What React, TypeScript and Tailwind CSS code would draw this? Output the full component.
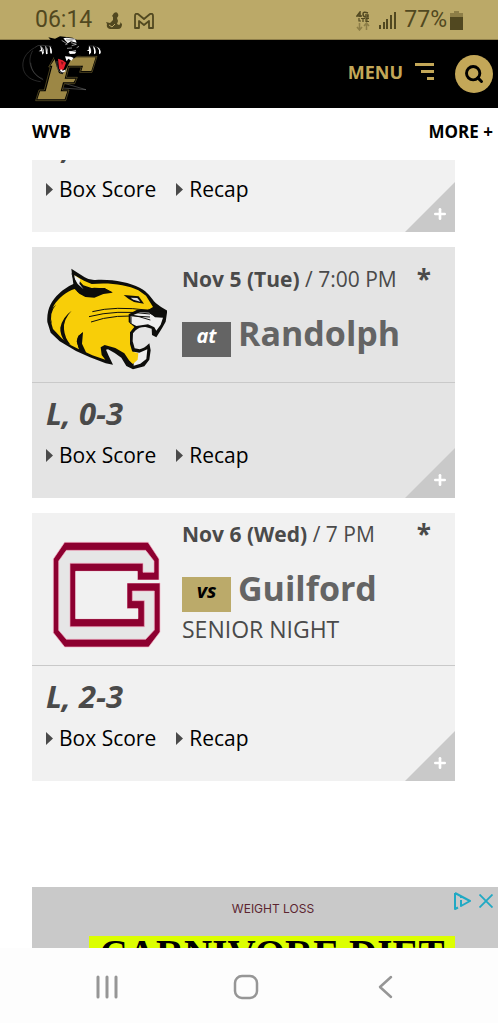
import { Plus, Search } from "lucide-react";

const games = [
  {
    id: "randolph",
    date: "Nov 5 (Tue)",
    time: "7:00 PM",
    place: "at",
    opponent: "Randolph",
    note: "",
    result: "L, 0-3",
    card: "bg-[#e4e4e4]",
    badge: "bg-[#646464] text-white",
    Logo: WildcatLogo,
  },
  {
    id: "guilford",
    date: "Nov 6 (Wed)",
    time: "7 PM",
    place: "vs",
    opponent: "Guilford",
    note: "SENIOR NIGHT",
    result: "L, 2-3",
    card: "bg-[#f1f1f1]",
    badge: "bg-[#bbaa6a] text-black",
    Logo: GuilfordLogo,
  },
];

function PantherLogo() {
  return (
    <svg viewBox="60 108 252 204" className="h-[68px] w-[84px]" aria-hidden="true">
      {/* tail */}
      <path d="M104 143 C76 158 64 182 70 208 C76 230 96 242 122 245 M98 152 C80 184 92 220 130 240 M92 188 C94 214 108 230 128 236" fill="none" stroke="#666" strokeWidth="1.2" />
      <path d="M186 248 L258 269 L186 264" fill="#000" stroke="#777" strokeWidth="1.5" />
      {/* letter */}
      <path d="M164 169 H291 L276 217 H239 L244 201 H207 L199 232 H232 L224 251 H193 L187 270 H207 L197 302 H107 L117 270 H133 L151 201 H146 Z" fill="#000" stroke="#8f7c3b" strokeWidth="1.5" />
      <path d="M168 172 H287 L274 213 H244 L249 197 H204 L194 236 H227 L221 247 H189 L182 274 H202 L194 298 H112 L120 274 H137 L157 197 H151 Z" fill="#9c8745" />
      {/* body and head */}
      <path d="M106 137 L158 131 L154 122 L145 112 L165 116 L180 109 L218 113 L232 121 L240 138 L240 160 L224 174 L212 181 L196 211 L187 223 L177 219 L170 200 L162 171 L125 164 L100 158 Z" fill="#000" />
      <path d="M232 141 L262 135 L280 137 L300 150 L292 166 L244 168 Z" fill="#000" />
      <path d="M104 143 Q112 134 128 136 L155 139 M265 138 Q282 134 301 146" fill="none" stroke="#777" strokeWidth="1.2" />
      {/* claws */}
      <path d="M121 137 Q133 144 132 158 L127 164 L125 154 L116 154 L123 149 Z M136 137 Q146 145 143 161 L138 163 L137 151 Z M149 137 Q158 147 155 161 L151 160 Z" fill="#fff" />
      <path d="M267 138 Q276 144 273 158 L267 164 L267 153 L260 153 L266 149 Z M279 138 Q291 147 287 160 L282 163 L282 151 Z M291 140 Q305 149 302 160 L297 163 L297 151 Z" fill="#fff" />
      <path d="M125 140 l5 17 M139 141 l4 17 M272 141 l3 14 M286 143 l3 15" stroke="#000" strokeWidth="1.5" />
      {/* face */}
      <path d="M190 115 L199 113 L225 116 L230 128 L213 124 L203 130 Z" fill="#fff" />
      <path d="M198 118 L226 119 M199 123 L218 121" stroke="#555" strokeWidth="1.3" />
      <path d="M185 121 L202 132 L196 134 M213 128 L229 133 L215 137 M201 145 L216 144 M230 143 L237 139 M206 157 L228 151" fill="none" stroke="#d8d8d8" strokeWidth="2" />
      <path d="M207 153 L229 155 L225 161 L209 162 Z" fill="#fff" />
      <path d="M174 176 L188 181 L198 188 L191 207 L184 213 L177 206 Z" fill="#e5202c" />
      <path d="M182 184 L186 196 L191 187 Z" fill="#8c111b" />
      <path d="M195 169 L200 184 L205 176 L214 182 L221 174 L213 170 Z M183 207 L188 212 L195 209 L196 215 L187 217 L180 213 Z" fill="#fff" />
      <path d="M171 183 Q168 207 183 219 Q193 221 199 207" fill="none" stroke="#aaa" strokeWidth="1.2" />
    </svg>
  );
}

function WildcatLogo() {
  return (
    <svg viewBox="45 17 360 360" className="size-[120px]" role="img" aria-label="Randolph WildCats">
      <path d="M118 58 L158 84 Q171 93 190 92 C240 89 291 99 323 115 C350 129 355 144 372 162 Q389 176 406 184 L401 217 L390 237 L373 264 L360 257 L359 238 L341 233 Q322 232 311 243 L303 252 L302 276 L308 297 L323 300 Q336 298 352 282 L356 303 L352 331 L337 351 L303 360 L283 350 L268 325 L248 311 L228 300 L222 301 L230 319 L243 346 L221 342 L174 324 L132 305 L83 276 L56 250 L46 218 Q44 189 56 165 C68 143 89 120 124 104 Z" fill="#0d0d0b" />
      <path d="M126 77 L156 94 L179 104 C226 99 283 104 319 123 L342 139 L363 173 L349 181 L315 181 L290 195 L290 218 L307 233 L294 249 L294 284 L301 308 L305 326 L302 343 L291 333 L277 312 L250 296 L218 287 L206 294 L209 317 L220 331 L181 318 L162 309 L150 283 L153 249 L139 259 L134 276 L141 300 L111 285 L89 267 L63 239 L55 211 Q55 188 66 168 C80 146 104 126 128 119 L142 133 L160 143 L187 145 L214 134 L242 130 L218 116 L181 117 L154 108 Z" fill="#f8ce08" />
      <path d="M127 78 L145 90 L142 103 L154 119 L140 116 Q127 96 127 78 Z" fill="#eee" />
      <path d="M117 69 L137 104 L154 119 L187 115 L217 117 L242 129 L208 131 L188 143 L158 139 L136 127 Z" fill="#0d0d0b" />
      <path d="M73 165 Q50 193 60 224 Q48 204 54 184 Z M119 184 Q93 211 96 240 Q98 266 116 287 L101 281 Q83 256 85 235 Q91 204 119 184 Z M153 247 Q139 271 155 307 L144 302 Q131 280 137 265 Z" fill="#0d0d0b" />
      <path d="M275 137 L320 141 L336 163 L306 158 Q288 149 275 137 Z" fill="#0d0d0b" />
      <path d="M296 145 L316 146 L325 157 L304 151 Z" fill="#ddd" />
      <path d="M295 201 L324 189 L353 190 L369 204 L393 205 L386 226 L373 244 L367 234 L348 225 L313 230 L296 221 Z" fill="#eee" />
      <path d="M305 307 L322 310 L346 300 L343 329 L325 343 L305 349 Z" fill="#eee" />
      <path d="M298 306 L319 312 L317 331 L303 344 L291 331 Z" fill="#f8ce08" />
      <path d="M349 178 L366 188 L403 186 L398 202 L372 203 L354 193 Z" fill="#0d0d0b" />
      <path d="M181 187 Q248 169 352 183 M171 202 Q253 180 354 194 M177 218 Q247 192 354 203 M293 196 Q322 201 355 212 M297 203 L297 224" fill="none" stroke="#0d0d0b" strokeWidth="3" />
    </svg>
  );
}

function GuilfordLogo() {
  return (
    <svg viewBox="48 57 360 360" className="size-[120px]" role="img" aria-label="Guilford Quakers">
      <path d="M101 97 H351 L384 147 V210 H319 V184 H134 V326 H321 V296 H288 V219 H387 V366 L353 411 H101 L67 368 V147 Z" fill="#8d0030" stroke="#f7b6ca" strokeWidth="2" />
      <path d="M106 121 H344 L369 153 V187 H336 V160 H117 V350 H340 V272 H304 V243 H370 V360 L344 388 H106 L83 361 V153 Z" fill="#e6e6e6" stroke="#f3a6be" strokeWidth="2" />
      <path d="M134 184 H319 V210 H384 V219 H288 V296 H321 V326 H134 Z" fill="#f1f1f1" />
    </svg>
  );
}

function StatusBar() {
  return (
    <div className="flex h-10 items-center justify-between border-b border-[#8f7f4b] bg-[#bba968] px-[35px] pt-0.5 font-['Roboto',sans-serif] text-[23px] text-[#514820]">
      <div className="flex items-center">
        <span>06:14</span>
        <svg viewBox="0 0 16 18" className="ml-3.5 h-[18px] w-4" fill="currentColor" aria-hidden="true">
          <path d="M6 4 L8 1 Q11-1 12 2 Q13 4 11 6 L12 9 L11 12 L13 13 Q15 12 14 10 L16 12 Q16 17 12 17 H4 Q0 16 1 12 L0 10 L4 11 L7 8 L7 5 Z" />
          <path d="M3 13 L6 15 L9 12" fill="none" stroke="#bba968" />
        </svg>
        <svg viewBox="0 0 20 16" className="ml-3 h-4 w-5" fill="none" stroke="currentColor" strokeWidth="1.8" strokeLinejoin="round" aria-hidden="true">
          <path d="M1 15 V3 Q1 0 4 1 L10 6 L16 1 Q19 0 19 3 V15 H15 V8 L10 12 L5 8 V15 Z" />
        </svg>
      </div>
      <div className="flex items-center">
        <svg viewBox="0 0 14 20" className="h-5 w-3.5" fill="none" stroke="currentColor" strokeWidth="1.5" aria-hidden="true">
          <path d="M4 6 V1 L1 5 H6 M12 2 Q7 0 7 3 Q7 6 10 6 H12 V4 H9" />
          <path d="M3 7 V10 H5 M5 7.5 H9 M7 7.5 V11 M13 7.5 H10 V10.5 H13 M10 9 H12" strokeWidth="1.2" />
          <path d="M3.5 12 V19 M1 16 L3.5 19 L6 16 M10.5 19 V12 M8 15 L10.5 12 L13 15" stroke="#8d7e47" />
        </svg>
        <svg viewBox="0 0 17 17" className="ml-[9px] size-[17px]" fill="currentColor" aria-hidden="true">
          <path d="M0 13h2v4H0zM4 10h2v7H4zM7 7h2v10H7zM11 3h2v14h-2zM15 0h2v17h-2z" />
        </svg>
        <span className="ml-2">77%</span>
        <svg viewBox="0 0 13 19" className="ml-[3px] h-[19px] w-[13px]" aria-hidden="true">
          <path d="M4 0h5v2h4v4H0V2h4z" fill="#8d7e47" />
          <path d="M0 6h13v13H0z" fill="currentColor" />
        </svg>
      </div>
    </div>
  );
}

function Header() {
  return (
    <header className="flex h-[68px] items-start justify-between bg-black pl-5 pr-[5px]">
      <a href="#home" aria-label="Home" className="-mt-1">
        <PantherLogo />
      </a>
      <div className="flex items-center pt-[15px]">
        <button type="button" className="flex items-center gap-3 pb-1 text-lg font-bold text-[#c3a758]">
          MENU
          <svg viewBox="0 0 19 18" className="h-[18px] w-[19px]" fill="currentColor" aria-hidden="true">
            <path d="M0 0h19v3H0zM6 7h13v3H6zM12 14h7v3h-7z" />
          </svg>
        </button>
        <button type="button" aria-label="Search" className="ml-[21px] flex size-[38px] items-center justify-center rounded-full bg-[#c3a758] text-black">
          <Search className="size-5" strokeWidth={3.5} />
        </button>
      </div>
    </header>
  );
}

function ResultSection({ result }: { result: string }) {
  return (
    <div className="relative border-t border-[#c9c9c9] pb-7 pl-3.5 pt-3">
      <p className="text-[31px] font-bold italic leading-9 text-[#4a4a4a]">{result}</p>
      <div className="mt-[9px] flex gap-5 text-[21px] leading-[30px] text-black">
        {["Box Score", "Recap"].map((label) => (
          <a key={label} href={label === "Recap" ? "#recap" : "#box-score"} className="flex items-center gap-1.5">
            <svg viewBox="0 0 7 13" className="h-[13px] w-[7px]" fill="#4a4a4a" aria-hidden="true">
              <path d="M0 0 L7 6.5 L0 13 Z" />
            </svg>
            {label}
          </a>
        ))}
      </div>
      <button
        type="button"
        aria-label="Show more"
        className="absolute bottom-0 right-0 flex size-[50px] items-end justify-end bg-[#c9c9c9] pb-[10px] pr-[7px] text-white [clip-path:polygon(100%_0,100%_100%,0_100%)]"
      >
        <Plus className="size-4" strokeWidth={4} />
      </button>
    </div>
  );
}

function GameCard({ game }: { game: (typeof games)[number] }) {
  const { Logo } = game;
  return (
    <article className={`${game.card} text-[#4a4a4a]`}>
      <div className="flex min-h-[135px] items-center py-[7px] pl-[15px] pr-6">
        <Logo />
        <div className="ml-[15px] flex-1 pb-1">
          <div className="flex items-center justify-between text-[21px] leading-7">
            <p>
              <b>{game.date}</b> / {game.time}
            </p>
            <b className="text-[26px] leading-7">*</b>
          </div>
          <div className="flex h-[67px] items-end gap-[7px] pb-[3px]">
            <span className={`${game.badge} flex h-[35px] w-[49px] items-start justify-center text-xl font-bold italic leading-7`}>
              {game.place}
            </span>
            <h2 className="pb-px text-[34px] font-bold leading-[46px] text-[#646464]">{game.opponent}</h2>
          </div>
          {game.note && <p className="mb-[11px] text-[23px] leading-7">{game.note}</p>}
        </div>
      </div>
      <ResultSection result={game.result} />
    </article>
  );
}

function AdBanner() {
  return (
    <aside className="relative ml-8 mt-auto h-[61px] overflow-hidden bg-[#c9c9c9] text-center">
      <p className="pl-4 pt-3 font-['Inter',sans-serif] text-xs leading-5 text-[#5c2530]">WEIGHT LOSS</p>
      <p className="ml-[57px] mr-[43px] mt-[17px] whitespace-nowrap bg-[#dcff00] font-['Liberation_Serif',serif] text-[39px] font-bold leading-9 text-black">
        CARNIVORE DIET
      </p>
      <div className="absolute right-[5px] top-[5px] flex items-center gap-2 text-[#20a9c4]">
        <a href="#ad-choices" aria-label="Ad choices">
          <svg viewBox="0 0 18 18" className="size-[18px]" fill="none" stroke="currentColor" strokeWidth="2" strokeLinejoin="round" aria-hidden="true">
            <path d="M2 1 L17 9 L8 14 V8 M2 1 V17 L5 15.5 M8 4.5 V6" />
          </svg>
        </a>
        <button type="button" aria-label="Close ad">
          <svg viewBox="0 0 14 14" className="size-3.5" stroke="currentColor" strokeWidth="1.8" aria-hidden="true">
            <path d="M0.5 0.5 L13.5 13.5 M13.5 0.5 L0.5 13.5" />
          </svg>
        </button>
      </div>
    </aside>
  );
}

function NavigationBar() {
  return (
    <nav className="grid h-[75px] grid-cols-3 items-center justify-items-center bg-[#fdfdfd] pl-[37px] pr-[42px] pt-0.5 text-[#969696]">
      <button type="button" aria-label="Recent apps">
        <svg viewBox="0 0 24 24" className="size-6" stroke="currentColor" strokeWidth="3" strokeLinecap="round">
          <path d="M3 2V22M12 2V22M21 2V22" />
        </svg>
      </button>
      <button type="button" aria-label="Home screen">
        <svg viewBox="0 0 26 26" className="size-[26px]" fill="none" stroke="currentColor" strokeWidth="2.5">
          <rect x="2" y="2" width="22" height="22" rx="7" />
        </svg>
      </button>
      <button type="button" aria-label="Back">
        <svg viewBox="0 0 24 24" className="size-6" fill="none" stroke="currentColor" strokeWidth="2.5" strokeLinecap="round" strokeLinejoin="round">
          <path d="M17 2 L6 12 L17 22" />
        </svg>
      </button>
    </nav>
  );
}

export default function App() {
  return (
    <div className="flex min-h-screen flex-col bg-white font-['Open_Sans',sans-serif]">
      <StatusBar />
      <Header />
      <div className="flex h-[52px] items-center justify-between pb-1 pl-8 pr-[5px] text-[17px] font-bold text-black">
        <h1>WVB</h1>
        <a href="#more">MORE +</a>
      </div>

      <main className="ml-8 mr-[43px] flex flex-col gap-[15px]">
        {/* earlier game, scrolled most of the way out of the list */}
        <article className="flex h-[72px] flex-col justify-end overflow-hidden bg-[#f1f1f1]">
          <ResultSection result="L, 0-3" />
        </article>
        {games.map((game) => (
          <GameCard key={game.id} game={game} />
        ))}
      </main>

      <AdBanner />
      <NavigationBar />
    </div>
  );
}
